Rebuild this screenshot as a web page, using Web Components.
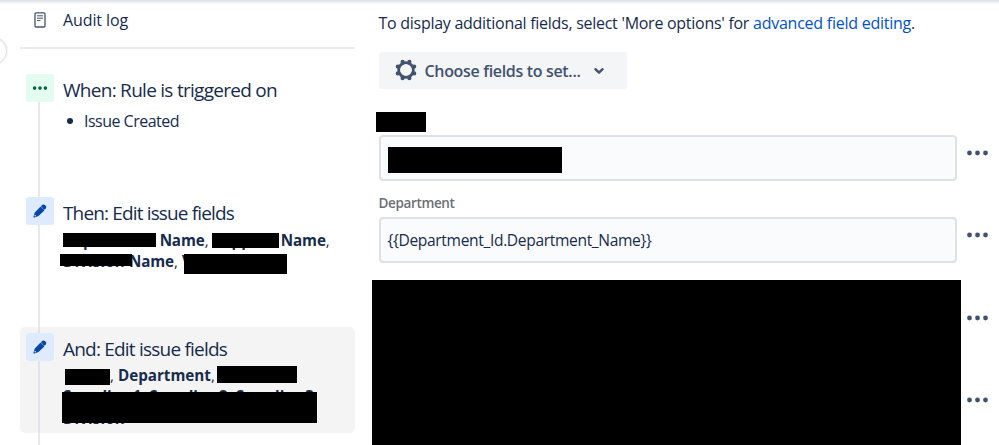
<!DOCTYPE html>
<html lang="en">
<head>
<meta charset="utf-8">
<title>Automation rule</title>
<style>
body {
  margin: 0;
  width: 999px;
  height: 445px;
  overflow: hidden;
  background: #fff;
  color: #172b4d;
  font-family: "Open Sans", "Noto Sans", sans-serif;
}
</style>
</head>
<body>
<rule-app></rule-app>
<script>
function define(name, html, setup) {
  const template = document.createElement("template");
  template.innerHTML = html.trim();
  customElements.define(name, class extends HTMLElement {
    connectedCallback() {
      if (this.shadowRoot) {
        return;
      }
      this.attachShadow({ mode: "open" }).appendChild(template.content.cloneNode(true));
      if (setup) {
        setup(this, this.shadowRoot);
      }
    }
  });
}

// One line of text, tracked to take up the given width
define("text-line", `
<style>
:host { display: block; flex: none; white-space: pre; line-height: 22px; width: max-content; }
</style><slot></slot>`, (host) => {
  const width = +host.getAttribute("width");
  host.style.fontSize = host.getAttribute("size") + "px";
  if (width) {
    const natural = host.getBoundingClientRect().width;
    host.style.letterSpacing = (width - natural) / host.textContent.length + "px";
  }
});

// Black bar laid over a piece of text: x, y, width, height
define("redact-bar", `
<style>
:host { display: block; position: absolute; background: #000; }
</style>`, (host) => {
  const [x, y, w, h] = host.getAttribute("box").split(" ");
  host.style.cssText = `left:${x}px;top:${y}px;width:${w}px;height:${h}px`;
});

define("more-dots", `
<style>
:host { display: block; flex: none; width: 22px; height: 6px; }
svg { display: block; }
</style>
<svg width="22" height="6" fill="#42526e">
  <circle cx="2.5" cy="3" r="2.4"/><circle cx="10.5" cy="3" r="2.4"/><circle cx="18.5" cy="3" r="2.4"/>
</svg>`);

define("step-icon", `
<style>
:host { display: flex; flex: none; width: 28px; height: 28px; border-radius: 3px; background: #deebff; }
:host([kind="trigger"]) { background: #e3fcef; }
svg { display: none; }
:host([kind="trigger"]) .dots, :host([kind="edit"]) .pencil { display: block; }
</style>
<svg class="dots" width="28" height="28" fill="#006644">
  <circle cx="8.6" cy="14.1" r="1.8"/><circle cx="14" cy="14.1" r="1.8"/><circle cx="19.4" cy="14.1" r="1.8"/>
</svg>
<svg class="pencil" width="28" height="28" fill="#0747a6">
  <path d="M14.6 9.6l3.8 3.8-5.9 5.5-3.9 1.6c-.8.3-1.4-.3-1.1-1.1l1.3-4z"/>
  <path d="M15.4 8.9l1.1-1c.8-.7 1.7-.7 2.4 0l.9.9c.7.7.7 1.6 0 2.4l-.8 1.2z"/>
  <path d="M15 9.2l2-1.6 3 3-2 2.4z"/>
  <circle cx="9.2" cy="18.8" r=".8" fill="#deebff"/>
</svg>`);

define("rule-step", `
<style>
:host { display: flex; box-sizing: border-box; position: relative; width: 335px; padding: 6px 0 0 6px; border-radius: 5px; }
:host([selected]) { background: #f4f4f4; }
.line { position: absolute; left: 18px; top: 0; bottom: 0; width: 2px; background: #e8e9ef; }
:host([kind="trigger"]) .line { top: 34px; }
:host([selected]) .line { background: #e3e4ea; }
step-icon { position: relative; }
.body { margin-left: 9px; padding-top: 5px; }
</style>
<div class="line"></div>
<step-icon></step-icon>
<div class="body"><slot></slot></div>`, (host, root) => {
  root.querySelector("step-icon").setAttribute("kind", host.getAttribute("kind"));
});

define("rule-sidebar", `
<style>
:host { display: block; flex: none; position: relative; width: 372px; height: 445px; overflow: hidden; }
.audit { display: flex; align-items: center; height: 39px; padding-left: 34px; gap: 17px; }
.rule { height: 2px; margin: 8px 17px 0 20px; background: #e8e9ef; }
.steps { display: flex; flex-direction: column; margin: 19px 0 0 20px; }
.first { height: 123px; }
.second { height: 136px; }
.third { height: 106px; }
.tail { width: 2px; height: 20px; margin-left: 18px; background: #e8e9ef; }
.knob { position: absolute; left: -21px; top: 37px; width: 26px; height: 26px; border: 1px solid #dfe1e6; border-radius: 50%; background: #fff; box-shadow: 0 0 2px #ddd; }
.bullet { display: flex; align-items: center; gap: 11px; padding: 9px 0 0 4px; }
.bullet i { width: 6px; height: 6px; border-radius: 50%; background: #172b4d; }
.fields { display: flex; flex-direction: column; padding-top: 5px; }
.third .fields { padding-top: 4px; }
.second .row + .row { margin-top: -1px; }
.row { display: flex; height: 21.5px; }
.third .row + .row { height: 22px; margin-top: -.5px; }
.third .row:last-child { margin-top: 0; }
.strong { font-weight: 700; }
.gap { flex: none; }
</style>
<div class="audit">
  <svg width="12" height="16" fill="none" stroke="#42526e">
    <rect x="1" y=".8" width="10" height="14.2" rx="1.2" stroke-width="1.3"/>
    <path d="M3 3.8h6M3 6.2h6M3 8.6h3.5"/>
  </svg>
  <text-line size="16" width="65">Audit log</text-line>
</div>
<div class="rule"></div>
<div class="knob"></div>
<div class="steps">
  <rule-step class="first" kind="trigger">
    <text-line size="19" width="214">When: Rule is triggered on</text-line>
    <div class="bullet"><i></i><text-line size="16" width="95">Issue Created</text-line></div>
  </rule-step>
  <rule-step class="second" kind="edit">
    <text-line size="19" width="171">Then: Edit issue fields</text-line>
    <div class="fields">
      <div class="row">
        <div class="gap" style="width:20px"></div><text-line class="strong" size="15.2">p</text-line>
        <div class="gap" style="width:67px"></div><text-line class="strong" size="15.2" width="45">Name</text-line><text-line size="15.2">,</text-line>
        <div class="gap" style="width:23px"></div><text-line class="strong" size="15.2">pp</text-line>
        <div class="gap" style="width:30px"></div><text-line class="strong" size="15.2" width="45">Name</text-line><text-line size="15.2">,</text-line>
      </div>
      <div class="row">
        <text-line class="strong" size="15.2" width="62">Division</text-line>
        <div class="gap" style="width:4px"></div><text-line class="strong" size="15.2" width="45">Name</text-line><text-line size="15.2">,</text-line>
        <div class="gap" style="width:4px"></div><text-line class="strong" size="15.2">V</text-line>
      </div>
    </div>
  </rule-step>
  <rule-step class="third" kind="edit" selected>
    <text-line size="19" width="164">And: Edit issue fields</text-line>
    <div class="fields">
      <div class="row">
        <div class="gap" style="width:47px"></div><text-line size="15.2">,</text-line>
        <div class="gap" style="width:4px"></div><text-line class="strong" size="15.2" width="93">Department</text-line><text-line size="15.2">,</text-line>
      </div>
      <div class="row">
        <text-line class="strong" size="15.2">S</text-line>
        <div class="gap" style="width:31px"></div><text-line class="strong" size="15.2">li</text-line>
        <div class="gap" style="width:21px"></div><text-line class="strong" size="15.2">1</text-line>
        <div class="gap" style="width:8px"></div><text-line class="strong" size="15.2">S</text-line>
        <div class="gap" style="width:31px"></div><text-line class="strong" size="15.2">li</text-line>
        <div class="gap" style="width:21px"></div><text-line class="strong" size="15.2">2</text-line>
        <div class="gap" style="width:8px"></div><text-line class="strong" size="15.2">S</text-line>
        <div class="gap" style="width:31px"></div><text-line class="strong" size="15.2">li</text-line>
        <div class="gap" style="width:21px"></div><text-line class="strong" size="15.2">3</text-line>
      </div>
      <div class="row"><text-line class="strong" size="15.2" width="62">Division</text-line></div>
    </div>
  </rule-step>
  <div class="tail"></div>
</div>
<redact-bar box="63 233 92.5 14"></redact-bar>
<redact-bar box="212 233 67 15"></redact-bar>
<redact-bar box="60 254 72 12"></redact-bar>
<redact-bar box="184 254 103 20"></redact-bar>
<redact-bar box="65 369 45 15.5"></redact-bar>
<redact-bar box="217 366 80 17"></redact-bar>
<redact-bar box="62 392 255 31"></redact-bar>`);

define("field-button", `
<style>
:host { display: flex; align-items: center; box-sizing: border-box; width: 248px; height: 37px; padding-left: 16px; border-radius: 3px; background: #f4f5f7; color: #42526e; font-weight: 600; }
svg { flex: none; }
.gear { margin: 0 8px 2px 0; }
.chevron { margin-left: 12px; }
</style>
<svg class="gear" width="22" height="22" viewBox="-11 -11 22 22" fill="none" stroke="#42526e">
  <circle r="7.2" stroke-width="3"/>
  <g stroke-width="4.2" stroke-linecap="round">
    <path d="M3.4-8.2v.2M8.2-3.4h-.2M8.2 3.4h-.2M3.4 8.2v-.2M-3.4 8.2v-.2M-8.2 3.4h.2M-8.2-3.4h.2M-3.4-8.2v.2"/>
  </g>
  <circle r="5.8" fill="#f4f5f7" stroke="none"/>
</svg>
<slot></slot>
<svg class="chevron" width="12" height="10" fill="none" stroke="#42526e" stroke-width="2.4" stroke-linecap="round" stroke-linejoin="round">
  <path d="M2.4 3.2L6 6.6l3.6-3.4"/>
</svg>`);

define("field-row", `
<style>
:host { display: flex; align-items: center; height: 46px; gap: 10px; }
.box { display: flex; flex: none; align-items: center; box-sizing: border-box; width: 578px; height: 46px; padding-left: 7px; border: 2px solid #dfe1e6; border-radius: 4px; background: #fafbfc; }
more-dots { margin-bottom: 10px; }
</style>
<div class="box"><slot></slot></div>
<more-dots></more-dots>`);

define("field-panel", `
<style>
:host { display: block; flex: none; position: relative; box-sizing: border-box; width: 627px; height: 445px; padding: 12px 0 0 6.5px; overflow: hidden; }
.intro { display: flex; height: 22px; }
.link { color: #0052cc; }
field-button { margin-top: 18px; }
.label { height: 22px; margin: 11.5px 0 3px; color: #6b6e76; font-weight: 600; }
.label.empty { margin-top: 20.7px; }
</style>
<div class="intro"><text-line size="16" width="374.5">To display additional fields, select 'More options' for </text-line><text-line class="link" size="16" width="158">advanced field editing</text-line><text-line size="16">.</text-line></div>
<field-button><text-line size="16" width="156">Choose fields to set...</text-line></field-button>
<div class="label empty"></div>
<field-row></field-row>
<div class="label"><text-line size="13.5" width="76">Department</text-line></div>
<field-row><text-line size="15.6" width="264">{{Department_Id.Department_Name}}</text-line></field-row>
<div class="label"></div>
<field-row></field-row>
<div class="label"></div>
<field-row></field-row>
<redact-bar box="4 112 50 20"></redact-bar>
<redact-bar box="16 147 174 26"></redact-bar>
<redact-bar box="0 280 589 165"></redact-bar>`);

define("rule-app", `
<style>
:host { display: flex; position: relative; width: 999px; height: 445px; }
.shade { position: absolute; left: 0; top: 0; width: 999px; height: 4px; background: linear-gradient(#dcdde3, #eeeff2 50%, #fff); }
</style>
<rule-sidebar></rule-sidebar>
<field-panel></field-panel>
<div class="shade"></div>`);
</script>
</body>
</html>
